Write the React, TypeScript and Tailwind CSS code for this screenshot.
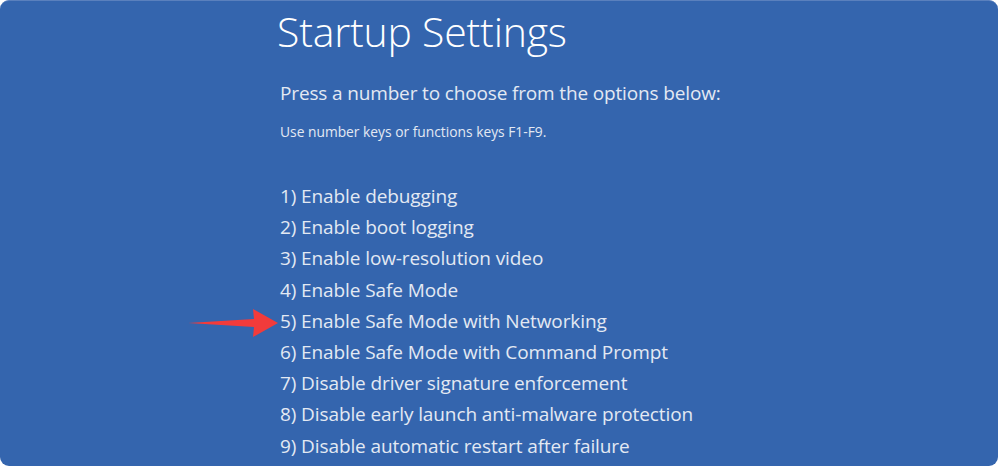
import React from "react";

const opcoes = [
  "1) Enable debugging",
  "2) Enable boot logging",
  "3) Enable low-resolution video",
  "4) Enable Safe Mode",
  "5) Enable Safe Mode with Networking",
  "6) Enable Safe Mode with Command Prompt",
  "7) Disable driver signature enforcement",
  "8) Disable early launch anti-malware protection",
  "9) Disable automatic restart after failure",
];

function Seta() {
  // seta vermelha de anotação apontando para a opção 5
  return (
    <svg
      className="absolute left-[186px] top-[306px]"
      width="94"
      height="32"
      viewBox="0 0 94 32"
    >
      <path d="M2 16 L68 12 L67 2 L92 16 L67 30 L68 20 Z" fill="#f23b3b" />
    </svg>
  );
}

export default function App() {
  return (
    <div className="h-[469px] w-[1000px] bg-white">
      <div
        className="relative h-[466px] w-[998px] overflow-hidden rounded-[9px] border-t border-[#5a80bd] bg-[#3465ae] pl-[277px] text-[#e3e9f3]"
        style={{ fontFamily: '"Open Sans", "Noto Sans", sans-serif' }}
      >
        <h1 className="pt-[3px] text-[41px] font-light leading-[54px] tracking-[-0.2px] text-white">
          Startup Settings
        </h1>
        <p className="mt-[22px] pl-[3px] text-[19px] leading-[26px] tracking-[-0.15px]">
          Press a number to choose from the options below:
        </p>
        <p className="mt-[17px] pl-[3px] text-[13.8px] leading-[18px]">
          Use number keys or functions keys F1-F9.
        </p>
        <ul className="mt-[40px] pl-[3px]">
          {opcoes.map((o) => (
            <li key={o} className="text-[19px] leading-[31.2px] tracking-[-0.1px]">
              {o}
            </li>
          ))}
        </ul>
        <Seta />
      </div>
    </div>
  );
}
